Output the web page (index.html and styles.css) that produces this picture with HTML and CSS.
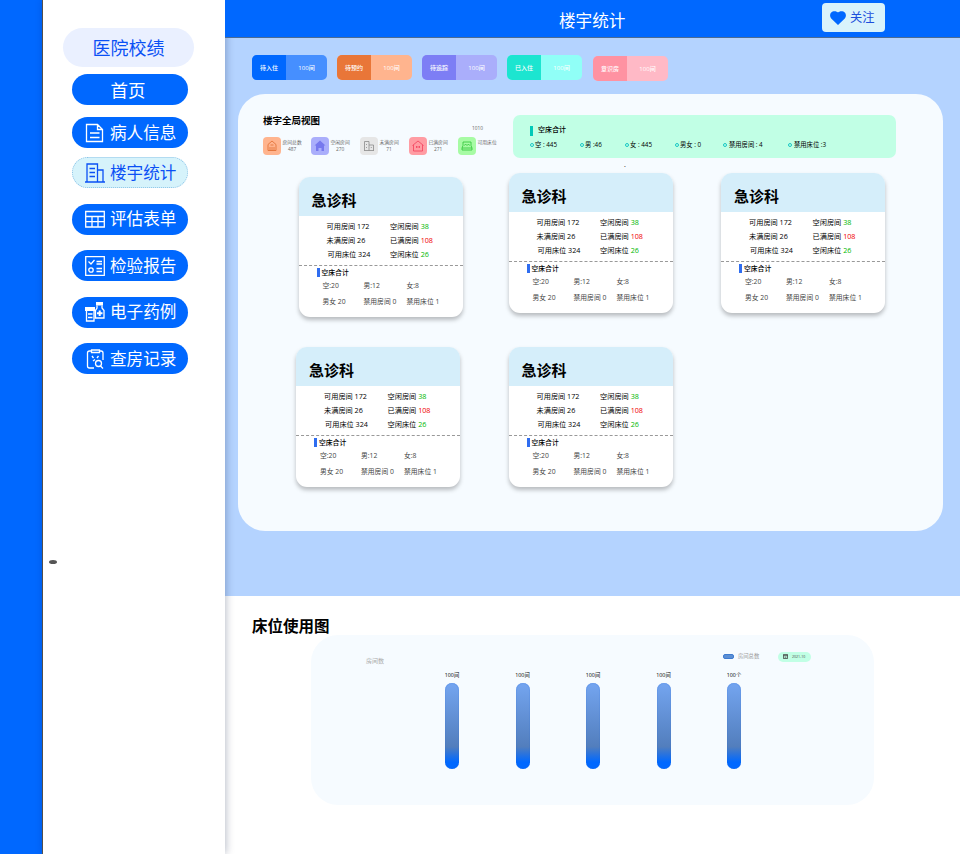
FILE: index.html
```html
<!DOCTYPE html>
<html lang="zh-CN">
<head>
    <meta charset="UTF-8">
    <meta name="viewport" content="width=device-width, initial-scale=1.0">
    <title>楼宇统计</title>
    <link rel="stylesheet" href="styles.css">
</head>
<body>
    <div class="page">
        <div class="rail"></div>
        <div class="sidebar">
            <div class="brand">医院校绩</div>
            <ul class="nav">
                <li class="nav-item home">首页</li>
                <li class="nav-item patient">
                    <svg class="nav-icon" viewBox="0 0 20 20"><path d="M1.500 1.500h11l5 5v12h-16zM12.500 1.500v5h5M5 10h9.500M5 14.500h9.500"/></svg>
                    <span>病人信息</span>
                </li>
                <li class="nav-item building active">
                    <svg class="nav-icon" viewBox="0 0 20 20"><path d="M0 19h20M2 19V1h10.500v18M12.500 7H18v12M4.500 5.500h5.500M4.500 9.500h5.500M4.500 13.500h5.500"/></svg>
                    <span>楼宇统计</span>
                </li>
                <li class="nav-item table">
                    <svg class="nav-icon" viewBox="0 0 20 20"><path d="M.7 2.500h18.600v15.500H.7zM.7 7.500h18.600M.7 12.700h18.600M7 7.500V18M13 7.500V18"/></svg>
                    <span>评估表单</span>
                </li>
                <li class="nav-item report">
                    <svg class="nav-icon" viewBox="0 0 20 20"><path d="M.7.7h18.600v18.600H.7zM3.500 5.500l2.500 2.500 3.500-4M11.500 5.500h5.500M11.500 8h5.500M11.500 12.500h5.500M11.500 15.500h5.500"/><circle cx="6" cy="14" r="2.200"/></svg>
                    <span>检验报告</span>
                </li>
                <li class="nav-item medicine">
                    <svg class="nav-icon" viewBox="0 0 20 20"><path class="fill" d="M0 5h10v4H0zM11 0h7v3.500h-7z"/><path d="M1.500 9v10h7.500V9M3 12h4.500M3 15.500h4.500M12 3.500V6l-1.500 2.500V16H19V8.500L17 6V3.500"/><path class="thick" d="M14.700 8.500v5.500M12 11.200h5.500"/></svg>
                    <span>电子药例</span>
                </li>
                <li class="nav-item ward">
                    <svg class="nav-icon" viewBox="0 0 20 20"><path d="M6 2H4.500Q2.500 2 2.500 4v13q0 2 2 2H9M15 2h1q2 0 2 2v7M6.500 1h8v2.500h-8zM7 7l1.500 2M13.500 7L12 9M8 12l2-1.500M15.500 17l2.500 2.500"/><circle cx="13.500" cy="14.500" r="3"/></svg>
                    <span>查房记录</span>
                </li>
            </ul>
            <i class="handle"></i>
        </div>
        <div class="main">
            <div class="header">
                <h1 class="header-title">楼宇统计</h1>
                <div class="follow">
                    <svg class="heart" viewBox="0 0 16 14"><path d="M8 14L1.200 7.500C-.8 5 0 1.500 2.600.5 5 -.4 7 .5 8 1.500c1-1 3-1.900 5.400-1 2.600 1 3.400 4.500 1.400 7z"/></svg>
                    <span>关注</span>
                </div>
            </div>
            <div class="overview">
                <div class="tags">
                    <div class="tag blue"><span>待入住</span><span>100间</span></div>
                    <div class="tag orange"><span>待预约</span><span>100间</span></div>
                    <div class="tag purple"><span>待追踪</span><span>100间</span></div>
                    <div class="tag cyan"><span>已入住</span><span>100间</span></div>
                    <div class="tag pink"><span>意识房</span><span>100间</span></div>
                </div>
                <div class="panel">
                    <div class="panel-top">
                        <div class="view">
                            <h2 class="view-title">楼宇全局视图</h2>
                            <div class="stats">
                                <div class="stat orange">
                                    <svg class="stat-icon" viewBox="0 0 18 18"><path d="M5 13.500V7.500L9 4l4 3.500v6zM7 13.500V10M9 13.500V10M11 13.500V10M7.500 8h3"/></svg>
                                    <p>房间总数<br>487</p>
                                </div>
                                <div class="stat purple">
                                    <svg class="stat-icon" viewBox="0 0 18 18"><path class="fill" d="M9 3.500l5.500 5H13V14h-2.500v-3h-3v3H5V8.500H3.500z"/></svg>
                                    <p>空闲房间<br>270</p>
                                </div>
                                <div class="stat gray">
                                    <svg class="stat-icon" viewBox="0 0 18 18"><path d="M4 13.500h10M4.500 13.500v-9H9v9M9 8h4.500v5.500M6.500 7v1M6.500 10v1M11.300 10v1"/></svg>
                                    <p>未满房间<br>71</p>
                                </div>
                                <div class="stat red">
                                    <svg class="stat-icon" viewBox="0 0 18 18"><path d="M3.500 8.500L9 4l5.500 4.500M4.500 8v6h9V8M7.500 11V9l1.500 1.500L10.500 9v2"/></svg>
                                    <p>已满房间<br>271</p>
                                </div>
                                <div class="stat green">
                                    <svg class="stat-icon" viewBox="0 0 18 18"><path d="M5 8.500V5h8v3.500l1 2.500v2H4v-2zM6.500 8.500l1-1.500 1.500 1.500L10.500 7l1 1.500M4 11h10"/></svg>
                                    <p>可用床位</p>
                                    <em class="stat-badge">1010</em>
                                </div>
                            </div>
                        </div>
                        <div class="empty-beds">
                            <h3 class="empty-title">空床合计</h3>
                            <ul class="empty-list">
                                <li>空 : 445</li>
                                <li>男 :46</li>
                                <li>女 : 445</li>
                                <li>男女 : 0</li>
                                <li>禁用房间 : 4</li>
                                <li>禁用床位 :3</li>
                            </ul>
                        </div>
                    </div>
                    <div class="dot">.</div>
                    <div class="cards">
                        <div class="card first">
                            <h3 class="card-head">急诊科</h3>
                            <div class="rooms">
                                <p>可用房间 172</p><p>空闲房间 <b class="ok">38</b></p>
                                <p>未满房间 26</p><p>已满房间 <b class="full">108</b></p>
                                <p>可用床位 324</p><p>空闲床位 <b class="ok">26</b></p>
                            </div>
                            <div class="beds">
                                <h4>空床合计</h4>
                                <div class="beds-grid">
                                    <p>空:20</p><p>男:12</p><p>女:8</p>
                                    <p>男女 20</p><p>禁用房间 0</p><p>禁用床位 1</p>
                                </div>
                            </div>
                        </div>
                        <div class="card">
                            <h3 class="card-head">急诊科</h3>
                            <div class="rooms">
                                <p>可用房间 172</p><p>空闲房间 <b class="ok">38</b></p>
                                <p>未满房间 26</p><p>已满房间 <b class="full">108</b></p>
                                <p>可用床位 324</p><p>空闲床位 <b class="ok">26</b></p>
                            </div>
                            <div class="beds">
                                <h4>空床合计</h4>
                                <div class="beds-grid">
                                    <p>空:20</p><p>男:12</p><p>女:8</p>
                                    <p>男女 20</p><p>禁用房间 0</p><p>禁用床位 1</p>
                                </div>
                            </div>
                        </div>
                        <div class="card">
                            <h3 class="card-head">急诊科</h3>
                            <div class="rooms">
                                <p>可用房间 172</p><p>空闲房间 <b class="ok">38</b></p>
                                <p>未满房间 26</p><p>已满房间 <b class="full">108</b></p>
                                <p>可用床位 324</p><p>空闲床位 <b class="ok">26</b></p>
                            </div>
                            <div class="beds">
                                <h4>空床合计</h4>
                                <div class="beds-grid">
                                    <p>空:20</p><p>男:12</p><p>女:8</p>
                                    <p>男女 20</p><p>禁用房间 0</p><p>禁用床位 1</p>
                                </div>
                            </div>
                        </div>
                        <div class="card">
                            <h3 class="card-head">急诊科</h3>
                            <div class="rooms">
                                <p>可用房间 172</p><p>空闲房间 <b class="ok">38</b></p>
                                <p>未满房间 26</p><p>已满房间 <b class="full">108</b></p>
                                <p>可用床位 324</p><p>空闲床位 <b class="ok">26</b></p>
                            </div>
                            <div class="beds">
                                <h4>空床合计</h4>
                                <div class="beds-grid">
                                    <p>空:20</p><p>男:12</p><p>女:8</p>
                                    <p>男女 20</p><p>禁用房间 0</p><p>禁用床位 1</p>
                                </div>
                            </div>
                        </div>
                        <div class="card">
                            <h3 class="card-head">急诊科</h3>
                            <div class="rooms">
                                <p>可用房间 172</p><p>空闲房间 <b class="ok">38</b></p>
                                <p>未满房间 26</p><p>已满房间 <b class="full">108</b></p>
                                <p>可用床位 324</p><p>空闲床位 <b class="ok">26</b></p>
                            </div>
                            <div class="beds">
                                <h4>空床合计</h4>
                                <div class="beds-grid">
                                    <p>空:20</p><p>男:12</p><p>女:8</p>
                                    <p>男女 20</p><p>禁用房间 0</p><p>禁用床位 1</p>
                                </div>
                            </div>
                        </div>
                    </div>
                </div>
            </div>
            <div class="usage">
                <h2 class="usage-title">床位使用图</h2>
                <div class="chart">
                    <div class="chart-top">
                        <span class="axis-name">房间数</span>
                        <div class="legend">
                            <i class="swatch"></i>
                            <span class="legend-name">房间总数</span>
                            <div class="date">
                                <svg class="date-icon" viewBox="0 0 6 6"><path d="M.5.500h5v5h-5zM.5 2h5M2 3.800h2"/></svg>
                                <span>2021-10</span>
                            </div>
                        </div>
                    </div>
                    <div class="bars">
                        <div class="bar-col"><span>100间</span><i class="bar"></i></div>
                        <div class="bar-col"><span>100间</span><i class="bar"></i></div>
                        <div class="bar-col"><span>100间</span><i class="bar"></i></div>
                        <div class="bar-col"><span>100间</span><i class="bar"></i></div>
                        <div class="bar-col"><span>100个</span><i class="bar"></i></div>
                    </div>
                </div>
            </div>
        </div>
    </div>
</body>
</html>
```
FILE: styles.css
```css
* {
    padding: 0;
    margin: 0;
    box-sizing: border-box;
}
body {
    font-family: "Open Sans", "Noto Sans CJK SC", sans-serif;
    background: #fff;
    overflow: hidden;
}
ul {
    list-style: none;
}
svg {
    fill: none;
    stroke: currentColor;
    flex: none;
}
.fill {
    fill: currentColor;
    stroke: none;
}
.page {
    display: flex;
    width: 960px;
    height: 854px;
}
.rail {
    width: 43px;
    background: #0068ff;
    border-right: 1px solid #5c5650;
}

/* sidebar */
.sidebar {
    position: relative;
    z-index: 1;
    width: 182px;
    padding-top: 28px;
    background: #fff;
    box-shadow: 1px 0 8px rgba(0, 20, 60, .28);
}
.brand {
    width: 131px;
    height: 39px;
    margin-left: 20px;
    border-radius: 20px;
    background: #eaf0ff;
    color: #0a50f5;
    font-size: 18px;
    line-height: 41px;
    text-align: center;
}
.nav {
    margin: 7px 0 0 29px;
}
.nav-item {
    display: flex;
    align-items: center;
    gap: 5px;
    width: 116px;
    height: 31px;
    padding-left: 13px;
    margin-bottom: 15.5px;
    border-radius: 16px;
    background: #0068ff;
    color: #fff;
    font-size: 16.6px;
    line-height: 30px;
}
.nav-item.home {
    justify-content: center;
    padding: 0 4px 0 0;
    margin-bottom: 12px;
    font-size: 17.5px;
}
.nav-item.patient {
    margin-bottom: 9px;
}
.nav-item.active {
    border: 1px dotted #8dc4e8;
    padding-left: 12px;
    background: #d6f3fb;
    color: #0a50f5;
}
.nav-icon {
    width: 20px;
    height: 20px;
    stroke-width: 1.3;
}
.thick {
    stroke-width: 2;
}
.handle {
    position: absolute;
    left: 6px;
    top: 560px;
    width: 8px;
    height: 4px;
    border-radius: 50%;
    background: #555;
}

/* header */
.main {
    width: 735px;
}
.header {
    position: relative;
    z-index: 2;
    display: flex;
    height: 38px;
    background: #0068ff;
    border-bottom: 1px solid #4c6c94;
}
.header-title {
    width: 597px;
    padding-left: 334px;
    color: #fff;
    font-size: 16.6px;
    font-weight: 400;
    line-height: 42px;
}
.follow {
    display: flex;
    align-items: center;
    gap: 4px;
    width: 63px;
    height: 29px;
    margin-top: 3px;
    padding-left: 8px;
    border-radius: 4px;
    background: #d9f3fb;
    color: #1c4fdc;
    font-size: 12.3px;
    line-height: 32px;
}
.heart {
    width: 16px;
    height: 14px;
    fill: #0068ff;
    stroke: none;
}

/* overview */
.overview {
    height: 558px;
    padding: 17px 17px 0 13px;
    background: #b4d3ff;
}
.tags {
    display: flex;
    gap: 10px;
    height: 39px;
    padding-left: 14px;
}
.tag {
    display: flex;
    width: 75px;
    height: 25px;
    border-radius: 5px;
    overflow: hidden;
    color: #fff;
    font-size: 6px;
    font-weight: 500;
    line-height: 27px;
    text-align: center;
}
.tag span:first-child {
    width: 34px;
}
.tag span:last-child {
    flex: 1;
}
.tag.blue { background: #468fff; }
.tag.blue span:first-child { background: #0068ff; }
.tag.orange { background: #ffb48e; }
.tag.orange span:first-child { background: #e97638; }
.tag.purple { background: #aaaefb; }
.tag.purple span:first-child { background: #7d7ef5; }
.tag.cyan { background: #90fff7; }
.tag.cyan span:first-child { background: #1ce5d0; }
.tag.pink { background: #ffb9c6; margin: 1px 0 0 1px; }
.tag.pink span:first-child { background: #ff92a2; }

.panel {
    width: 705px;
    height: 437px;
    padding: 21px 0 0 25px;
    border-radius: 27px;
    background: #f6fbff;
}
.panel-top {
    display: flex;
    height: 43px;
}
.view {
    width: 250px;
}
.view-title {
    margin-top: -2px;
    font-size: 9.5px;
    font-weight: 700;
    line-height: 15px;
}
.stats {
    display: flex;
    margin-top: 9px;
}
.stat {
    position: relative;
    display: flex;
    gap: 1.5px;
    width: 49px;
    color: #666;
    font-size: 4.8px;
    line-height: 7px;
    text-align: center;
    white-space: nowrap;
}
.stat:first-child {
    width: 48px;
}
.stat p {
    padding-top: 2px;
}
.stat-icon {
    width: 18px;
    height: 18px;
    border-radius: 4px;
    stroke-width: .8;
}
.orange .stat-icon { background: #ffb48e; color: #e06c30; }
.purple .stat-icon { background: #aaaefb; color: #7678ee; }
.gray .stat-icon { background: #e6e6e6; color: #8a8a8a; }
.red .stat-icon { background: #ff9ca3; color: #f2405c; }
.green .stat-icon { background: #a7fba4; color: #2cc436; }
.stat-badge {
    position: absolute;
    left: 14px;
    top: -12px;
    font-style: normal;
}

.empty-beds {
    width: 383px;
    height: 43px;
    padding: 11px 0 0 17px;
    border-radius: 7px;
    background: #c1ffe5;
}
.empty-title {
    height: 10px;
    padding-left: 5px;
    border-left: 3px solid #00c9b8;
    font-size: 7px;
    font-weight: 500;
    line-height: 8px;
}
.empty-list {
    display: grid;
    grid-template-columns: 50px 45px 50px 48px 65px 60px;
    margin-top: 4px;
    font-size: 6.3px;
    line-height: 9px;
    white-space: nowrap;
}
.empty-list li {
    display: flex;
    align-items: center;
    gap: 1px;
}
.empty-list li::before {
    content: "";
    width: 4px;
    height: 4px;
    box-sizing: border-box;
    border: 1px solid #19c8c4;
    border-radius: 50%;
}
.empty-list li:nth-child(n+5)::before {
    margin-right: 1px;
}
.dot {
    height: 15px;
    padding-left: 361px;
    font-size: 7px;
    line-height: 13px;
}

/* department cards */
.cards {
    display: grid;
    grid-template-columns: 212.5px 212.5px 164px;
    grid-template-rows: 174px 140px;
    padding-left: 33px;
}
.card {
    width: 164px;
    height: 140px;
    border-radius: 11px;
    background: #fff;
    box-shadow: 0 3px 4px rgba(0, 0, 0, .25);
    overflow: hidden;
    white-space: nowrap;
}
.card.first {
    margin: 4px 0 0 2.5px;
}
.card-head {
    height: 39px;
    padding-left: 13px;
    background: #d5eefa;
    font-size: 15px;
    font-weight: 700;
    line-height: 46px;
}
.rooms {
    display: grid;
    grid-template-columns: 63.5px 1fr;
    align-content: start;
    height: 50px;
    padding: 4px 0 0 28px;
    border-bottom: 1px dashed #999;
    font-size: 7.2px;
    line-height: 13.8px;
}
.rooms p:nth-child(5) {
    padding-left: 1px;
}
.rooms b {
    font-weight: 400;
}
.ok {
    color: #00b800;
}
.full {
    color: #f00000;
}
.beds {
    padding: 2px 0 0 18px;
}
.beds h4 {
    height: 9px;
    padding-left: 2px;
    border-left: 3px solid #2f6df0;
    font-size: 6.8px;
    font-weight: 500;
    line-height: 9px;
}
.beds-grid {
    display: grid;
    grid-template-columns: 41px 43px 1fr;
    padding: 1px 0 0 6px;
    color: #444;
    font-size: 6.8px;
    line-height: 15.5px;
}

/* usage chart */
.usage {
    padding: 19px 0 0 27px;
}
.usage-title {
    height: 20px;
    font-size: 15.5px;
    font-weight: 700;
    line-height: 23px;
}
.chart {
    width: 563px;
    height: 170px;
    margin-left: 59px;
    padding: 17px 63px 0 55px;
    border-radius: 27px;
    background: #f6fbff;
}
.chart-top {
    display: flex;
    justify-content: space-between;
    height: 18px;
}
.axis-name {
    padding-top: 3px;
    color: #aaa;
    font-size: 6px;
    line-height: 12px;
}
.legend {
    display: flex;
    align-items: center;
    height: 9px;
}
.swatch {
    width: 11px;
    height: 5px;
    margin-right: 4px;
    border: 1px solid #3f7cd0;
    border-radius: 2px;
    background: #5c8fd4;
}
.legend-name {
    width: 40px;
    color: #999;
    font-size: 5.3px;
    line-height: 9px;
}
.date {
    display: flex;
    align-items: center;
    gap: 4px;
    width: 33px;
    height: 10px;
    padding-left: 5px;
    border-radius: 5px;
    background: #c1ffe5;
    color: #444;
    font-size: 3.5px;
}
.date-icon {
    width: 5px;
    height: 5px;
}
.bars {
    display: flex;
    gap: 50.5px;
    padding-left: 76px;
}
.bar-col {
    display: flex;
    flex-direction: column;
    align-items: center;
    width: 20px;
    font-size: 5.3px;
    line-height: 10px;
}
.bar {
    width: 14px;
    height: 86px;
    margin-top: 3px;
    border-radius: 7px;
    background: linear-gradient(#74a5f0, #527ebd 74%, #0068ff 92%);
    box-shadow: inset 0 0 1px #145fd7;
}
```
